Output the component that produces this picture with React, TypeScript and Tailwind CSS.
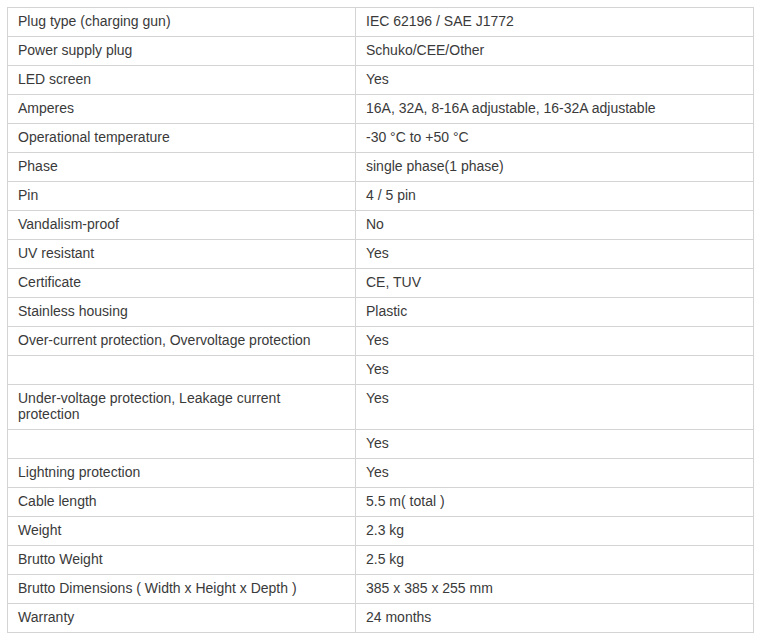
const rows: [string, string][] = [
  ["Plug type (charging gun)", "IEC 62196 / SAE J1772"],
  ["Power supply plug", "Schuko/CEE/Other"],
  ["LED screen", "Yes"],
  ["Amperes", "16A, 32A, 8-16A adjustable, 16-32A adjustable"],
  ["Operational temperature", "-30 °C to +50 °C"],
  ["Phase", "single phase(1 phase)"],
  ["Pin", "4 / 5 pin"],
  ["Vandalism-proof", "No"],
  ["UV resistant", "Yes"],
  ["Certificate", "CE, TUV"],
  ["Stainless housing", "Plastic"],
  ["Over-current protection, Overvoltage protection", "Yes"],
  ["", "Yes"],
  ["Under-voltage protection, Leakage current protection", "Yes"],
  ["", "Yes"],
  ["Lightning protection", "Yes"],
  ["Cable length", "5.5 m( total )"],
  ["Weight", "2.3 kg"],
  ["Brutto Weight", "2.5 kg"],
  ["Brutto Dimensions ( Width x Height x Depth )", "385 x 385 x 255 mm"],
  ["Warranty", "24 months"],
];

export default function App() {
  return (
    <main className="min-h-screen bg-white pt-[7px] pl-[7px] font-['Liberation_Sans',Arial,sans-serif] text-[14px] leading-[16px] text-[#3a3a3a]">
      <table className="w-[747px] table-fixed border-collapse">
        <colgroup>
          <col className="w-[348px]" />
          <col />
        </colgroup>
        <tbody>
          {rows.map(([label, value], i) => (
            <tr key={i}>
              <td className="h-[29px] border border-[#d4d4d4] px-[10px] pt-[5px] pb-[7px] align-top">
                {label}
              </td>
              <td className="border border-[#d4d4d4] px-[10px] pt-[5px] pb-[7px] align-top">
                {value}
              </td>
            </tr>
          ))}
        </tbody>
      </table>
    </main>
  );
}
